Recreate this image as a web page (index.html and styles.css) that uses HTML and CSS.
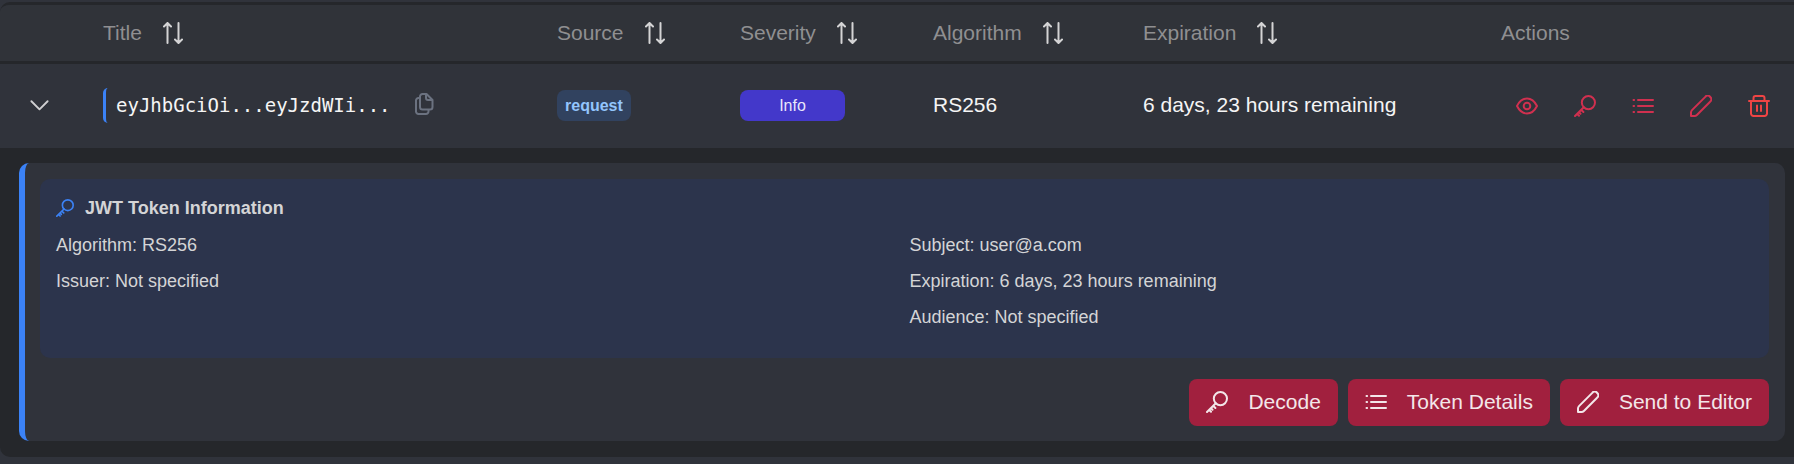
FILE: index.html
```html
<!DOCTYPE html>
<html lang="en">
<head>
<meta charset="utf-8">
<title>Tokens</title>
<link rel="stylesheet" href="styles.css">
</head>
<body>
<svg class="sprite" aria-hidden="true">
  <symbol id="sort" viewBox="0 0 22 22"><path d="M5.500 21V1.500M2 4.500l3.500-3.500 3.500 3.500M16.500 1v19.500M13 17.500l3.500 3.500 3.500-3.500"/></symbol>
  <symbol id="chevron" viewBox="0 0 22 22"><path d="M2.500 6.500l8.500 8.500 8.500-8.500"/></symbol>
  <symbol id="copy" viewBox="0 0 22 22"><path d="M12 1H9.500a2.500 2.500 0 0 0-2.500 2.500V14a2.500 2.500 0 0 0 2.500 2.500h7.500a2.500 2.500 0 0 0 2.500-2.500V7L13.500 1zM13 1v4a2 2 0 0 0 2 2h4.500M7 5H5.500A2.500 2.500 0 0 0 3 7.500V18.500A2.500 2.500 0 0 0 5.500 21h7.500a2.500 2.500 0 0 0 2.500-2.500v-1.500"/></symbol>
  <symbol id="eye" viewBox="0 0 22 22"><path d="M1 11C3.500 6 7 3.500 11 3.500S18.500 6 21 11c-2.500 5-6 7.500-10 7.500S3.500 16 1 11z"/><circle cx="11" cy="11" r="3.300"/></symbol>
  <symbol id="key" viewBox="0 0 22 22"><circle cx="14.400" cy="7.600" r="6.600"/><path d="M9.800 12.200L1 21M7.400 15l2 2M5 17.200l1.500 1.500M3.200 19l1.800 1.800"/></symbol>
  <symbol id="list" viewBox="0 0 22 22"><path d="M6 5h15M6 11h15M6 17h15M1.500 5h.6M1.500 11h.6M1.500 17h.6"/></symbol>
  <symbol id="pencil" viewBox="0 0 22 22"><path d="M1 21v-3.600c0-.9.300-1.600 1-2.300L15.300 1.900a2.800 2.800 0 0 1 4.800 0 2.900 2.900 0 0 1 0 4.800L6.900 20c-.7.7-1.400 1-2.300 1z"/></symbol>
  <symbol id="trash" viewBox="0 0 22 22"><path d="M1 6h20M3 6v12.500A2.500 2.500 0 0 0 5.500 21h11a2.500 2.500 0 0 0 2.500-2.500V6M5.500 6V3A2 2 0 0 1 7.500 1h7a2 2 0 0 1 2 2v3M9 10.500v5.500M13 10.500v5.500"/></symbol>
</svg>
<main class="panel">
  <table class="tokens">
    <colgroup>
      <col class="col-toggle"><col><col class="col-source"><col class="col-severity"><col class="col-algorithm"><col class="col-expiration"><col class="col-actions">
    </colgroup>
    <thead>
      <tr>
        <th></th>
        <th><button class="sort">Title <svg class="icon"><use href="#sort"/></svg></button></th>
        <th><button class="sort">Source <svg class="icon"><use href="#sort"/></svg></button></th>
        <th><button class="sort">Severity <svg class="icon"><use href="#sort"/></svg></button></th>
        <th><button class="sort">Algorithm <svg class="icon"><use href="#sort"/></svg></button></th>
        <th><button class="sort">Expiration <svg class="icon"><use href="#sort"/></svg></button></th>
        <th>Actions</th>
      </tr>
    </thead>
    <tbody>
      <tr class="token-row">
        <td class="toggle-cell"><button class="plain toggle" aria-label="Collapse row" aria-expanded="true"><svg class="icon"><use href="#chevron"/></svg></button></td>
        <td>
          <div class="title">
            <code class="token">eyJhbGciOi...eyJzdWIi...</code>
            <button class="plain copy" aria-label="Copy token"><svg class="icon"><use href="#copy"/></svg></button>
          </div>
        </td>
        <td><span class="badge source">request</span></td>
        <td><span class="badge severity">Info</span></td>
        <td>RS256</td>
        <td>6 days, 23 hours remaining</td>
        <td class="actions-cell">
          <div class="actions">
            <button class="plain action" aria-label="View"><svg class="icon"><use href="#eye"/></svg></button>
            <button class="plain action" aria-label="Decode"><svg class="icon"><use href="#key"/></svg></button>
            <button class="plain action" aria-label="Token details"><svg class="icon"><use href="#list"/></svg></button>
            <button class="plain action" aria-label="Edit"><svg class="icon"><use href="#pencil"/></svg></button>
            <button class="plain action danger" aria-label="Delete"><svg class="icon"><use href="#trash"/></svg></button>
          </div>
        </td>
      </tr>
      <tr class="detail-row">
        <td colspan="7">
          <section class="card">
            <div class="info">
              <h2 class="info-title"><svg class="icon"><use href="#key"/></svg>JWT Token Information</h2>
              <div class="info-grid">
                <div class="info-col">
                  <div>Algorithm: RS256</div>
                  <div>Issuer: Not specified</div>
                </div>
                <div class="info-col">
                  <div>Subject: user@a.com</div>
                  <div>Expiration: 6 days, 23 hours remaining</div>
                  <div>Audience: Not specified</div>
                </div>
              </div>
            </div>
            <div class="buttons">
              <button class="btn"><svg class="icon"><use href="#key"/></svg>Decode</button>
              <button class="btn"><svg class="icon"><use href="#list"/></svg>Token Details</button>
              <button class="btn"><svg class="icon"><use href="#pencil"/></svg>Send to Editor</button>
            </div>
          </section>
        </td>
      </tr>
    </tbody>
  </table>
</main>
</body>
</html>
```
FILE: styles.css
```css
* { box-sizing: border-box; }

body {
  margin: 0;
  padding-top: 2px;
  background: #30333b;
  color: #f5f5f5;
  font: 21px/26px "Liberation Sans", Arial, sans-serif;
}

button { font: inherit; color: inherit; cursor: pointer; }

.sprite { position: absolute; width: 0; height: 0; }

.icon {
  display: block;
  flex: none;
  width: 22px;
  height: 22px;
  fill: none;
  stroke: currentColor;
  stroke-width: 2;
  stroke-linecap: round;
  stroke-linejoin: round;
}

.panel {
  overflow: hidden;
  border-top: 3px solid #25272b;
  border-radius: 10px 0 0 10px;
}

.tokens {
  width: 100%;
  table-layout: fixed;
  border-collapse: separate;
  border-spacing: 0;
}

.col-toggle { width: 87px; }
.col-source { width: 183px; }
.col-severity { width: 193px; }
.col-algorithm { width: 210px; }
.col-expiration { width: 358px; }
.col-actions { width: 309px; }

th, td { padding: 0 16px; text-align: left; }

th {
  height: 59px;
  border-bottom: 3px solid #25272b;
  background: #303339;
  color: #8f8f91;
  font-weight: 400;
}

.sort {
  display: flex;
  align-items: center;
  gap: 20px;
  padding: 0;
  border: 0;
  background: none;
}

.sort .icon { color: #d4d4d5; }

.token-row td { height: 84px; padding-bottom: 2px; }

.plain {
  display: flex;
  align-items: center;
  justify-content: center;
  padding: 0;
  border: 0;
  background: none;
}

.token-row .toggle-cell { padding: 0 8px 2px 0; }
.toggle { width: 100%; height: 32px; color: #cfcfd1; }
.toggle .icon { width: 21px; height: 21px; }

.title { display: flex; align-items: center; gap: 12px; }

.token {
  padding: 4px 10px;
  border-left: 3px solid #3b82f6;
  border-radius: 5px;
  font: 19px/27px "DejaVu Sans Mono", monospace;
}

.copy { padding-bottom: 3px; color: #6b7280; }

.badge {
  display: inline-block;
  vertical-align: middle;
  padding: 0 8px;
  border-radius: 8px;
  font-size: 16px;
  line-height: 31px;
}

.source { background: #31425f; color: #93c5fd; font-weight: 700; }
.severity { width: 105px; background: #4338ca; color: #e8e6fa; text-align: center; }

.token-row .actions-cell { padding: 0 6px 0 0; }
.actions { display: flex; justify-content: flex-end; }
.action { width: 58px; height: 42px; color: #d0304f; }
.danger { color: #ef4444; }

.detail-row td { padding: 15px 9px 16px 19px; background: #25272b; }

.card {
  padding: 16px 16px 15px 15px;
  border-left: 6px solid #3b82f6;
  border-radius: 10px;
  background: #30333b;
}

.info {
  padding: 16px 16px 28px;
  border-radius: 10px;
  background: #2c344c;
  color: #d4d4d6;
  font-size: 18px;
}

.info-title {
  display: flex;
  align-items: center;
  gap: 11px;
  margin: 0 0 11px;
  font-size: 18px;
  line-height: 26px;
}

.info-title .icon { width: 18px; height: 18px; color: #3b82f6; }

.info-grid { display: grid; grid-template-columns: 1fr 1fr; gap: 10px; }
.info-col { display: flex; flex-direction: column; gap: 10px; }

.buttons {
  display: flex;
  flex-wrap: wrap;
  justify-content: flex-end;
  gap: 10px;
  margin-top: 21px;
}

.btn {
  display: flex;
  align-items: center;
  gap: 20px;
  height: 47px;
  padding: 0 17px 1px;
  border: 0;
  border-radius: 8px;
  background: #a1203e;
  color: #f3e6e9;
}
```
